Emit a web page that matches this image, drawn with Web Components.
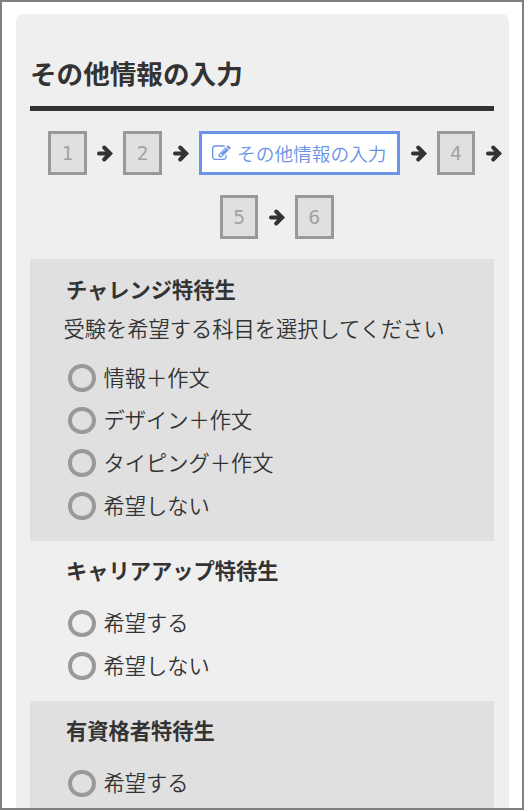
<!DOCTYPE html>
<html lang="ja">
<head>
<meta charset="utf-8">
<title>その他情報の入力</title>
<style>
html,body{margin:0;height:810px;overflow:hidden;background:#fff}
body{font-family:"Noto Sans CJK JP",sans-serif;color:#333}
</style>
</head>
<body>
<entry-page>
  <page-heading>その他情報の入力</page-heading>
  <step-list>
    <step-item>1</step-item><step-arrow></step-arrow>
    <step-item>2</step-item><step-arrow></step-arrow>
    <step-item active>その他情報の入力</step-item><step-arrow></step-arrow>
    <step-item>4</step-item><step-arrow></step-arrow>
  </step-list>
  <step-list second>
    <step-item>5</step-item><step-arrow></step-arrow>
    <step-item>6</step-item>
  </step-list>
  <form-section shaded style="height:281.5px">
    <span slot="title">チャレンジ特待生</span>
    <span slot="note">受験を希望する科目を選択してください</span>
    <radio-option>情報＋作文</radio-option>
    <radio-option>デザイン＋作文</radio-option>
    <radio-option>タイピング＋作文</radio-option>
    <radio-option>希望しない</radio-option>
  </form-section>
  <form-section style="height:160px">
    <span slot="title">キャリアアップ特待生</span>
    <radio-option>希望する</radio-option>
    <radio-option>希望しない</radio-option>
  </form-section>
  <form-section shaded style="height:160px">
    <span slot="title">有資格者特待生</span>
    <radio-option>希望する</radio-option>
  </form-section>
</entry-page>
<script>
function define(name, html){
  const t=document.createElement('template');
  t.innerHTML=html;
  customElements.define(name,class extends HTMLElement{
    constructor(){
      super();
      this.attachShadow({mode:'open'}).append(t.content.cloneNode(true));
    }
  });
}
define('entry-page',`<style>
:host{display:block;box-sizing:border-box;height:810px;overflow:hidden;border:2px solid #808080;padding:11.5px 13.5px 0}
main{box-sizing:border-box;height:900px;padding:37px 14.5px 0;background:#efefef;border-radius:7px 7px 0 0}
</style><main><slot></slot></main>`);
define('page-heading',`<style>
:host{display:block;box-sizing:border-box;height:60.5px;border-bottom:5.5px solid #333}
h1{margin:0;font-size:26.6px;line-height:44px;font-weight:700;white-space:nowrap}
</style><h1><slot></slot></h1>`);
define('step-list',`<style>
:host{display:flex;gap:10.5px;margin:20px 0 0 18.2px;height:44px;align-items:stretch}
:host([second]){margin:20px 0 20px 189.7px}
</style><slot></slot>`);
define('step-item',`<style>
:host{display:flex;flex:none;box-sizing:border-box;width:38.8px;border:3px solid #999;background:#e0e0e0;color:#a2a2a2;justify-content:center;align-items:center;font:18.67px/40px "DejaVu Sans",sans-serif}
svg{display:none}
span{height:38px}
:host([active]){width:201.7px;border-color:#6b93e6;background:#fff;color:#6b93e6;font:18.67px/37px "Noto Sans CJK JP",sans-serif;font-weight:350;white-space:nowrap;gap:6px}
:host([active]) svg{display:block;width:18.67px;height:18.67px;fill:currentColor;flex:none}
</style><svg viewBox="0 0 1792 1792"><path d="M888 1184l116-116-152-152-116 116v56h96v96h56zm440-720q-16-16-33 1l-350 350q-17 17-1 33t33-1l350-350q17-17 1-33zm80 594v190q0 119-84.500 203.500t-203.500 84.500h-832q-119 0-203.500-84.500t-84.500-203.500v-832q0-119 84.500-203.500t203.500-84.500h832q63 0 117 25 15 7 18 23 3 17-9 29l-49 49q-14 14-32 8-23-6-45-6h-832q-66 0-113 47t-47 113v832q0 66 47 113t113 47h832q66 0 113-47t47-113v-126q0-13 9-22l64-64q15-15 35-7t20 29zm-96-738l288 288-672 672h-288v-288zm444 132l-92 92-288-288 92-92q28-28 68-28t68 28l152 152q28 28 28 68t-28 68z"/></svg><span><slot></slot></span>`);
define('step-arrow',`<style>
:host{display:flex;flex:none;align-items:center;width:15.4px}
svg{display:block;width:15.4px;height:17px;overflow:visible}
</style><svg viewBox="0 0 15.4 17"><path d="M2 8.500H12.500M7.200 2.500L13.200 8.500L7.200 14.500" fill="none" stroke="#333" stroke-width="4" stroke-linecap="round"/></svg>`);
define('form-section',`<style>
:host{display:block;box-sizing:border-box;padding:9.5px 0 0 36px}
:host([shaded]){background:#e0e0e0}
h2{margin:0;font-size:21.25px;line-height:40px;font-weight:700;white-space:nowrap}
p{margin:0 0 0 -2.5px;font-size:21.25px;line-height:38px;font-weight:350;white-space:nowrap}
.options{display:flex;flex-direction:column;margin-top:12px}
p.has + .options{margin-top:10px}
</style><h2><slot name="title"></slot></h2><p><slot name="note"></slot></p><div class="options"><slot></slot></div>`);
define('radio-option',`<style>
:host{display:flex;align-items:center;gap:7.7px;height:42.7px;padding-left:2.3px;font-size:21.25px;font-weight:350;line-height:39.8px;white-space:nowrap}
i{box-sizing:border-box;width:27.5px;height:27.5px;border:4px solid #999;border-radius:50%}
span{height:42.7px}
</style><i></i><span><slot></slot></span>`);
document.querySelectorAll('form-section').forEach(s=>{
  s.shadowRoot.querySelector('p').classList.toggle('has',!!s.querySelector('[slot=note]'));
});
</script>
</body>
</html>
